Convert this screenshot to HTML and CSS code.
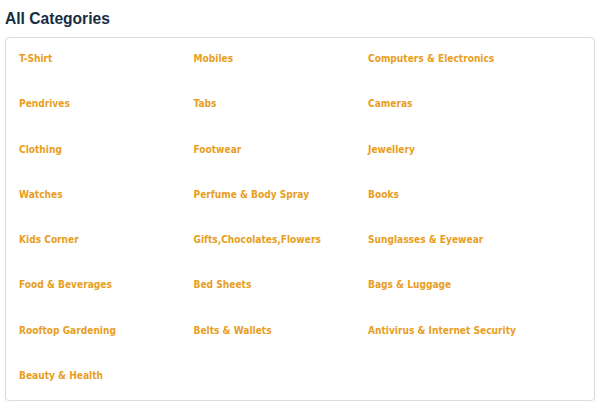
FILE: index.html
```html
<!DOCTYPE html>
<html>
<head>
<meta charset="utf-8">
<link rel="stylesheet" href="styles.css">
</head>
<body>
<div class="page">
  <h2 class="title">All Categories</h2>
  <div class="card">
    <ul class="grid">
      <li><a href="#">T-Shirt</a></li>
      <li><a href="#">Mobiles</a></li>
      <li><a href="#">Computers &amp; Electronics</a></li>
      <li><a href="#">Pendrives</a></li>
      <li><a href="#">Tabs</a></li>
      <li><a href="#">Cameras</a></li>
      <li><a href="#">Clothing</a></li>
      <li><a href="#">Footwear</a></li>
      <li><a href="#">Jewellery</a></li>
      <li><a href="#">Watches</a></li>
      <li><a href="#">Perfume &amp; Body Spray</a></li>
      <li><a href="#">Books</a></li>
      <li><a href="#">Kids Corner</a></li>
      <li><a href="#">Gifts,Chocolates,Flowers</a></li>
      <li><a href="#">Sunglasses &amp; Eyewear</a></li>
      <li><a href="#">Food &amp; Beverages</a></li>
      <li><a href="#">Bed Sheets</a></li>
      <li><a href="#">Bags &amp; Luggage</a></li>
      <li><a href="#">Rooftop Gardening</a></li>
      <li><a href="#">Belts &amp; Wallets</a></li>
      <li><a href="#">Antivirus &amp; Internet Security</a></li>
      <li><a href="#">Beauty &amp; Health</a></li>
    </ul>
  </div>
</div>
</body>
</html>
```
FILE: styles.css
```css
html, body {
  margin: 0;
  padding: 0;
  background: #ffffff;
}
.page {
  padding: 0 5px;
}
.title {
  margin: 0;
  padding-top: 9px;
  height: 37px;
  box-sizing: border-box;
  font-family: "Liberation Sans", Arial, sans-serif;
  font-weight: bold;
  font-size: 15.6px;
  line-height: 20px;
  color: #172d45;
}
.card {
  border: 1px solid #dcdcdc;
  border-radius: 4px;
  box-shadow: 0 1px 2px rgba(0,0,0,0.06);
  padding: 13px 13px 17px;
}
.grid {
  list-style: none;
  margin: 0;
  padding: 0;
  display: grid;
  grid-template-columns: 174.5px 174.5px 1fr;
  row-gap: 30.3px;
  font-family: "DejaVu Sans Condensed", "DejaVu Sans", sans-serif;
  font-weight: bold;
  font-size: 10.1px;
}
.grid li {
  height: 15px;
  line-height: 15px;
  white-space: nowrap;
}
.grid a {
  color: #e89e1e;
  text-decoration: none;
}
```
